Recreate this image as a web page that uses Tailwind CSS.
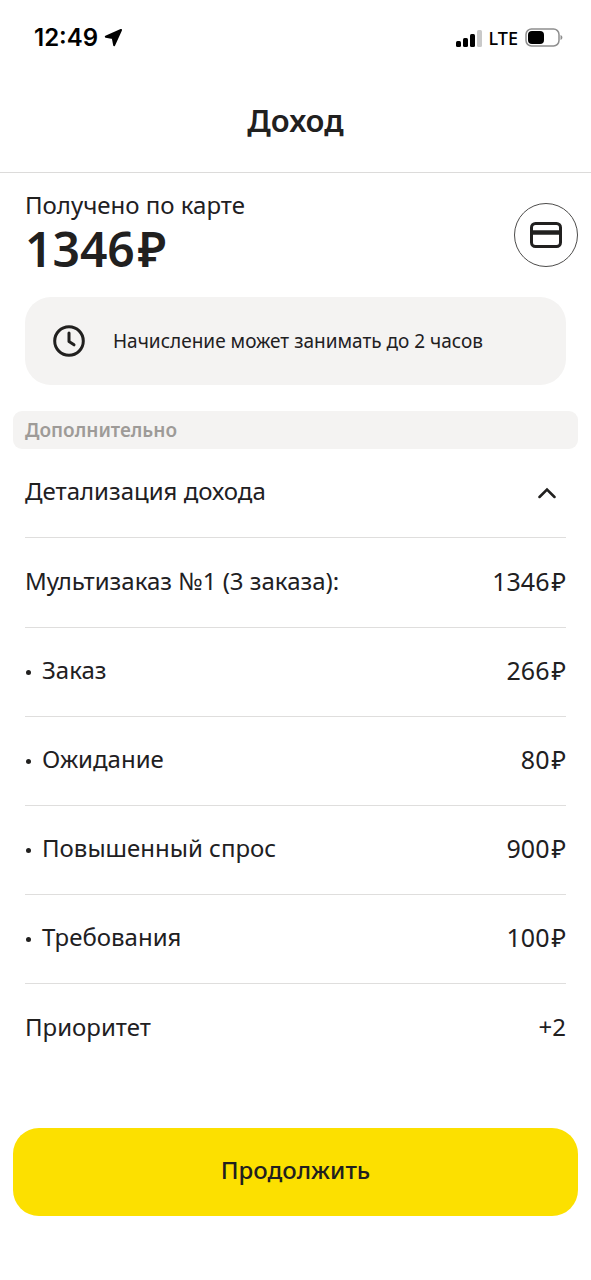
<!DOCTYPE html>
<html lang="ru">
<head>
<meta charset="utf-8">
<meta name="viewport" content="width=device-width, initial-scale=1">
<title>Доход</title>
<script src="https://cdn.jsdelivr.net/npm/@tailwindcss/browser@4"></script>
</head>
<body class="flex min-h-screen flex-col bg-white font-['Noto_Sans',sans-serif] text-[24px] leading-8 text-[#21201f]">
  <div class="flex h-[75px] items-center justify-between pr-7 pl-[34px] font-['Inter',sans-serif] text-black">
    <div class="flex items-center gap-[6px]">
      <span class="text-[24px] font-semibold">12:49</span>
      <svg class="size-[19px]" viewBox="0 0 19 19" aria-hidden="true"><path d="M17 2 1.800 8.700 8.800 10 10.200 17.200Z" stroke="#000" stroke-width="2" stroke-linejoin="round"/></svg>
    </div>
    <div class="flex items-center gap-[7px]">
      <svg class="h-[18px] w-[26px]" viewBox="0 0 26 18" aria-hidden="true"><rect x="0" y="12" width="5" height="6" rx="1.500"/><rect x="7" y="9" width="5" height="9" rx="1.500"/><rect x="14" y="5" width="5" height="13" rx="1.500"/><rect x="21" y="1" width="5" height="17" rx="1.500" fill="#c9c9c9"/></svg>
      <span class="font-['Noto_Sans',sans-serif] text-[18px] font-medium">LTE</span>
      <svg class="h-[19px] w-[38px]" viewBox="0 0 38 19" aria-hidden="true"><rect x="1" y="1" width="33" height="17" rx="5.500" fill="none" stroke="#8e8e8e" stroke-width="1.500"/><rect x="3" y="3" width="16" height="13" rx="4"/><path d="M35.500 7c2.500 1 2.500 4 0 5Z" fill="#8e8e8e"/></svg>
    </div>
  </div>
  <header class="flex h-[98px] items-center justify-center border-b border-[#dcdbda] pb-2">
    <h1 class="text-[31px] font-semibold">Доход</h1>
  </header>
  <main class="flex-1 px-[13px]">
    <section class="flex items-start justify-between pt-4 pl-3">
      <div>
        <p>Получено по карте</p>
        <p class="flex gap-[3px] text-[48px] leading-[56px] font-semibold">1346<span>₽</span></p>
      </div>
      <button type="button" aria-label="Карта" class="mt-[14px] flex size-16 items-center justify-center rounded-full border border-[#4d4c4b]">
        <svg class="h-[26px] w-8" viewBox="0 0 32 26" fill="none" stroke="#21201f" aria-hidden="true"><rect x="1.500" y="1.500" width="29" height="23" rx="4" stroke-width="3"/><path d="M1 10.500h30" stroke-width="4.500"/></svg>
      </button>
    </section>
    <section class="mx-3 mt-5 flex h-[88px] items-center gap-7 rounded-[26px] bg-[#f4f3f2] pl-7">
      <svg class="size-8 shrink-0" viewBox="0 0 32 32" fill="none" stroke="#21201f" stroke-width="3" aria-hidden="true"><circle cx="16" cy="16" r="14.300"/><path d="M16 8v8.500l5 3.300" stroke-linecap="round" stroke-linejoin="round"/></svg>
      <p class="text-[19px]">Начисление может занимать до 2 часов</p>
    </section>
    <h2 class="mt-[26px] h-[38px] rounded-[9px] bg-[#f4f3f2] pl-3 text-[19px] leading-[38px] font-semibold text-[#9e9b98]">Дополнительно</h2>
    <div class="px-3">
      <button type="button" aria-expanded="true" aria-controls="details" class="flex h-[89px] w-full items-center justify-between border-b border-[#dfdedd] pr-[10px] pb-1 text-left">
        <span>Детализация дохода</span>
        <svg class="mt-1 h-3 w-[18px]" viewBox="0 0 18 12" fill="none" stroke="#21201f" stroke-width="2.500" stroke-linecap="round" aria-hidden="true"><path d="m1.500 10 7.500-7.500 7.500 7.500"/></svg>
      </button>
      <dl id="details" class="pt-px">
        <div class="flex h-[89px] items-center justify-between border-b border-[#dfdedd] pb-1"><dt>Мультизаказ №1 (3 заказа):</dt><dd class="flex gap-[2px] text-[25px]">1346<span>₽</span></dd></div>
        <div class="flex h-[89px] items-center justify-between border-b border-[#dfdedd] pb-1"><dt class="flex items-center gap-[11px]"><span class="mt-1 ml-px size-[5px] rounded-full bg-[#21201f]"></span>Заказ</dt><dd class="flex gap-[2px] text-[25px]">266<span>₽</span></dd></div>
        <div class="flex h-[89px] items-center justify-between border-b border-[#dfdedd] pb-1"><dt class="flex items-center gap-[11px]"><span class="mt-1 ml-px size-[5px] rounded-full bg-[#21201f]"></span>Ожидание</dt><dd class="flex gap-[2px] text-[25px]">80<span>₽</span></dd></div>
        <div class="flex h-[89px] items-center justify-between border-b border-[#dfdedd] pb-1"><dt class="flex items-center gap-[11px]"><span class="mt-1 ml-px size-[5px] rounded-full bg-[#21201f]"></span>Повышенный спрос</dt><dd class="flex gap-[2px] text-[25px]">900<span>₽</span></dd></div>
        <div class="flex h-[89px] items-center justify-between border-b border-[#dfdedd] pb-1"><dt class="flex items-center gap-[11px]"><span class="mt-1 ml-px size-[5px] rounded-full bg-[#21201f]"></span>Требования</dt><dd class="flex gap-[2px] text-[25px]">100<span>₽</span></dd></div>
        <div class="flex h-[89px] items-center justify-between pb-1"><dt>Приоритет</dt><dd>+2</dd></div>
      </dl>
    </div>
  </main>
  <footer class="px-[13px] pb-16">
    <button type="button" class="h-[88px] w-full rounded-[26px] bg-[#fce000] pb-1 text-[24px] font-medium">Продолжить</button>
  </footer>
</body>
</html>
